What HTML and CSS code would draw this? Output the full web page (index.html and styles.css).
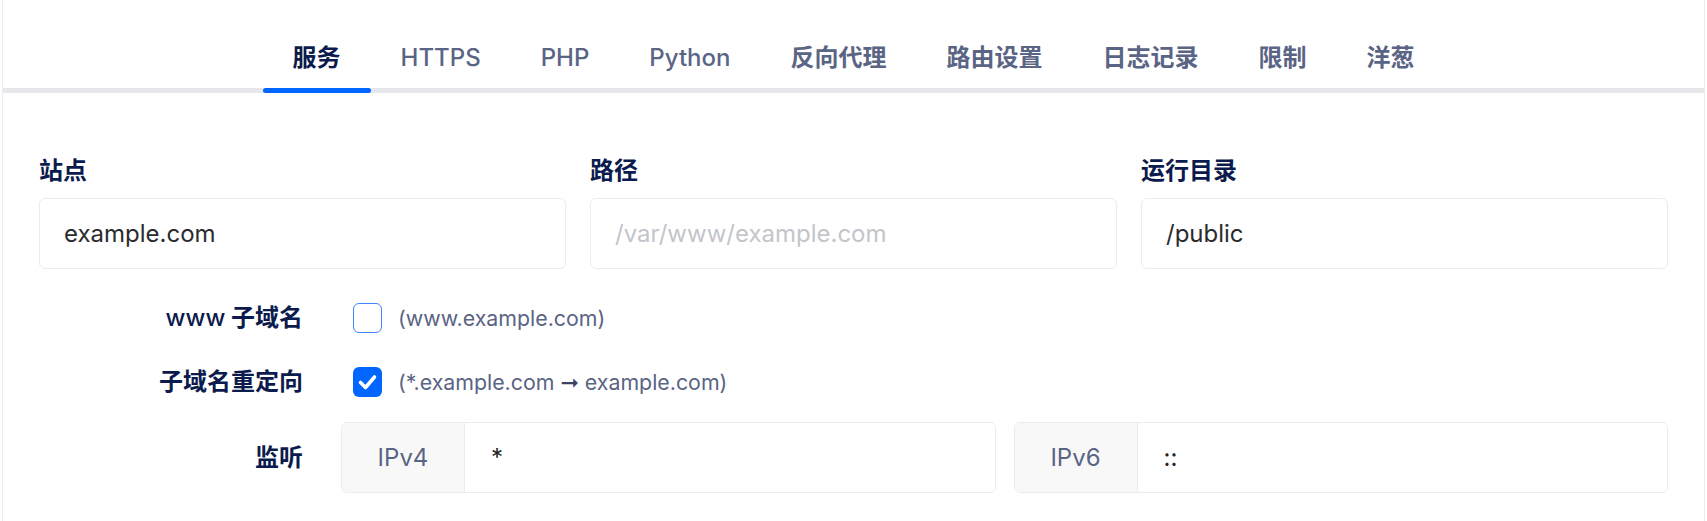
FILE: index.html
```html
<!DOCTYPE html>
<html lang="zh-CN">
<head>
<meta charset="utf-8">
<title>站点设置</title>
<link rel="stylesheet" href="styles.css">
</head>
<body>
<div class="card">
  <nav class="tabs">
    <a class="tab cjk active">服务</a>
    <a class="tab">HTTPS</a>
    <a class="tab">PHP</a>
    <a class="tab">Python</a>
    <a class="tab cjk">反向代理</a>
    <a class="tab cjk">路由设置</a>
    <a class="tab cjk">日志记录</a>
    <a class="tab cjk">限制</a>
    <a class="tab cjk">洋葱</a>
  </nav>
  <form class="form">
    <div class="fields">
      <div class="field">
        <label class="field-label">站点</label>
        <input class="input" type="text" value="example.com">
      </div>
      <div class="field">
        <label class="field-label">路径</label>
        <input class="input" type="text" placeholder="/var/www/example.com">
      </div>
      <div class="field">
        <label class="field-label">运行目录</label>
        <input class="input" type="text" value="/public">
      </div>
    </div>
    <div class="options">
      <div class="opt-label"><span class="latin">www</span> 子域名</div>
      <div class="opt-control">
        <span class="checkbox"></span>
        <span class="check-text">(www.example.com)</span>
      </div>

      <div class="opt-label">子域名重定向</div>
      <div class="opt-control">
        <span class="checkbox checked">
          <svg viewBox="0 0 29 30" width="29" height="30"><path d="M7.5 15.5 L12.5 20.5 L21.5 10" fill="none" stroke="#fff" stroke-width="3.6" stroke-linecap="round" stroke-linejoin="round"/></svg>
        </span>
        <span class="check-text">(*.example.com <span class="arrow">➞</span> example.com)</span>
      </div>

      <div class="opt-label">监听</div>
      <div class="listen">
        <div class="group">
          <span class="addon">IPv4</span>
          <input class="group-input" type="text" value="*">
        </div>
        <div class="group">
          <span class="addon">IPv6</span>
          <input class="group-input" type="text" value="::">
        </div>
      </div>
    </div>
  </form>
</div>
</body>
</html>
```

FILE: styles.css
```css
* {
  box-sizing: border-box;
}

html, body {
  margin: 0;
  padding: 0;
  background: #ffffff;
}

body {
  padding: 0 2px;
  font-family: Inter, "Noto Sans CJK SC", sans-serif;
  color: #0c1b4d;
}

.card {
  border: 1px solid #ececef;
  border-top: none;
  min-height: 540px;
}

.tabs {
  display: flex;
  justify-content: center;
  border-bottom: 5px solid #e5e7eb;
}

.tab {
  position: relative;
  padding: 42px 30px 14px;
  font-size: 24px;
  line-height: 32px;
  font-weight: 500;
  color: #5a6484;
  cursor: pointer;
  white-space: nowrap;
}

.tab.cjk {
  font-weight: 700;
}

.tab.active {
  color: #0c1b4d;
}

.tab.active::after {
  content: "";
  position: absolute;
  left: 0;
  right: 0;
  bottom: -5px;
  height: 5px;
  border-radius: 3px;
  background: #0066ff;
}

.form {
  padding: 62px 36px 40px;
}

.fields {
  display: grid;
  grid-template-columns: repeat(3, 1fr);
  column-gap: 24px;
}

.field {
  display: flex;
  flex-direction: column;
  gap: 11px;
}

.field-label {
  font-size: 24px;
  line-height: 32px;
  font-weight: 700;
  color: #0c1b4d;
}

.input {
  height: 71px;
  width: 100%;
  border: 1px solid #ececef;
  border-radius: 6px;
  padding: 0 24px;
  font-family: Inter, "Noto Sans CJK SC", sans-serif;
  font-size: 24px;
  color: #2b2b2e;
  background: #fff;
  outline: none;
}

.input::placeholder {
  color: #c3c5cb;
}

.options {
  margin-top: 25px;
  display: grid;
  grid-template-columns: 264px 1fr;
  column-gap: 38px;
  row-gap: 16px;
  align-items: center;
}

.opt-label {
  text-align: right;
  font-size: 24px;
  line-height: 32px;
  font-weight: 700;
  color: #0c1b4d;
}

.opt-label .latin {
  font-weight: 500;
}

.opt-control {
  display: flex;
  align-items: center;
  gap: 16px;
  min-height: 48px;
  padding-left: 12px;
}

.checkbox {
  display: flex;
  align-items: center;
  justify-content: center;
  width: 29px;
  height: 30px;
  border: 1.5px solid #3d86ff;
  border-radius: 6px;
  background: #fff;
}

.checkbox.checked {
  border: none;
  background: #0066ff;
}

.check-text {
  font-size: 21.33px;
  line-height: 30px;
  color: #5a6484;
}

.arrow {
  font-family: "DejaVu Sans", sans-serif;
  font-size: 22px;
  color: #3a4362;
}

.listen {
  display: grid;
  grid-template-columns: 1fr 1fr;
  column-gap: 18px;
}

.group {
  display: flex;
  height: 71px;
  border: 1px solid #ececef;
  border-radius: 6px;
  overflow: hidden;
}

.addon {
  display: flex;
  align-items: center;
  justify-content: center;
  width: 123px;
  flex: none;
  background: #f8f8f9;
  border-right: 1px solid #ececef;
  font-size: 24px;
  color: #5a6484;
}

.group-input {
  flex: 1;
  min-width: 0;
  border: none;
  outline: none;
  padding: 0 26px;
  font-family: Inter, "Noto Sans CJK SC", sans-serif;
  font-size: 24px;
  color: #222;
  background: #fff;
}
```
